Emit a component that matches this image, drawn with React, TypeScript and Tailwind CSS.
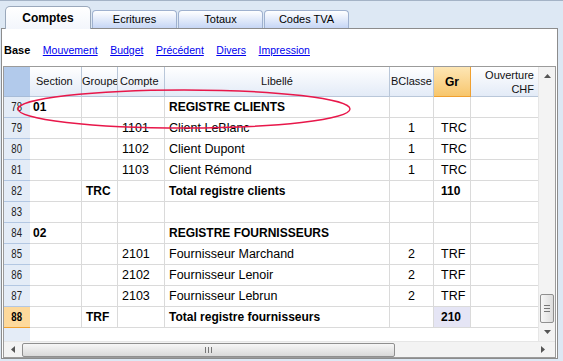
import React from 'react';

type Row = {
  n: number;
  section?: string;
  groupe?: string;
  compte?: string;
  libelle?: string;
  bclasse?: string;
  gr?: string;
  bold?: boolean;
  selected?: boolean;
};

const rows: Row[] = [
  { n: 78, section: '01', libelle: 'REGISTRE CLIENTS', bold: true },
  { n: 79, compte: '1101', libelle: 'Client LeBlanc', bclasse: '1', gr: 'TRC' },
  { n: 80, compte: '1102', libelle: 'Client Dupont', bclasse: '1', gr: 'TRC' },
  { n: 81, compte: '1103', libelle: 'Client Rémond', bclasse: '1', gr: 'TRC' },
  { n: 82, groupe: 'TRC', libelle: 'Total registre clients', gr: '110', bold: true },
  { n: 83 },
  { n: 84, section: '02', libelle: 'REGISTRE FOURNISSEURS', bold: true },
  { n: 85, compte: '2101', libelle: 'Fournisseur Marchand', bclasse: '2', gr: 'TRF' },
  { n: 86, compte: '2102', libelle: 'Fournisseur Lenoir', bclasse: '2', gr: 'TRF' },
  { n: 87, compte: '2103', libelle: 'Fournisseur Lebrun', bclasse: '2', gr: 'TRF' },
  { n: 88, groupe: 'TRF', libelle: 'Total registre fournisseurs', gr: '210', bold: true, selected: true },
];

const tabs = ['Ecritures', 'Totaux', 'Codes TVA'];
const links = ['Mouvement', 'Budget', 'Précédent', 'Divers', 'Impression'];

const cols = 'grid grid-cols-[26px_52px_36px_47px_225px_44px_37px_67px]';
const cell = 'h-[21px] border-r border-b border-[#dadada] flex items-center overflow-hidden whitespace-nowrap';
const head = 'h-[30px] border-r border-b border-[#b9c7d9] bg-gradient-to-b from-white to-[#e3ebf7] flex items-center text-[11px] text-[#111] overflow-hidden whitespace-nowrap';

const Arrow = ({ dir }: { dir: 'up' | 'down' | 'left' | 'right' }) => {
  const pts = {
    up: '0,4 3.5,0 7,4',
    down: '0,0 3.5,4 7,0',
    left: '4,0 0,3.5 4,7',
    right: '0,0 4,3.5 0,7',
  }[dir];
  const horiz = dir === 'left' || dir === 'right';
  return (
    <svg width={horiz ? 4 : 7} height={horiz ? 7 : 4} className="block">
      <polygon points={pts} fill="#555" />
    </svg>
  );
};

export default function App() {
  return (
    <div
      className="relative w-[563px] h-[361px] overflow-hidden bg-[#dde8f4] border-t border-[#a4b3c6]"
      style={{ fontFamily: '"Liberation Sans", Arial, sans-serif' }}
    >
      {/* tab strip */}
      <div className="flex items-end h-[27px] pl-[5px]">
        <div className="relative z-10 -mb-px w-[86px] h-[23px] rounded-t-[5px] border border-b-0 border-[#9aa8bb] bg-gradient-to-b from-white to-[#f3f6fc] flex items-center justify-center text-[12px] font-bold text-black">
          Comptes
        </div>
        {tabs.map((t) => (
          <div
            key={t}
            className="ml-[1px] w-[85px] h-[18px] rounded-t-[4px] border border-b-0 border-[#9fb1cf] bg-gradient-to-b from-white to-[#c6d6f5] flex items-center justify-center text-[11px] text-black"
          >
            {t}
          </div>
        ))}
      </div>

      {/* panel */}
      <div className="ml-[1px] w-[557px] h-[331px] border border-[#8c8c8c] bg-white flex flex-col">
        <div className="h-[37px] flex items-center pl-[2px] pt-[6px] gap-[12.5px] text-[10.5px]">
          <span className="font-bold text-black text-[11px]">Base</span>
          {links.map((l) => (
            <span key={l} className="text-[#0000ee] underline">
              {l}
            </span>
          ))}
        </div>

        <div className="ml-[1px] w-[553px] h-[292px] border border-[#9b9b9b] flex flex-col">
          <div className="flex h-[274px]">
            {/* table */}
            <div className="w-[534px] flex flex-col">
              <div className={cols}>
                <div className="h-[30px] bg-[#b2caeb] border-b border-[#a7bcd8]" />
                <div className={`${head} pl-[6px]`}>Section</div>
                <div className={`${head} pl-[0px]`}>Groupe</div>
                <div className={`${head} pl-[2px]`}>Compte</div>
                <div className={`${head} justify-center`}>Libellé</div>
                <div className={`${head} justify-center`}>BClasse</div>
                <div className="h-[30px] border-r border-b border-[#f0a030] bg-gradient-to-b from-[#fde6b4] to-[#f7c66c] flex items-center justify-center text-[12px] font-bold">
                  Gr
                </div>
                <div className="h-[30px] border-b border-[#b9c7d9] bg-gradient-to-b from-white to-[#e3ebf7] flex flex-col items-end justify-center pr-[4px] text-[11px] leading-[14px] text-[#111]">
                  <span>Ouverture</span>
                  <span>CHF</span>
                </div>
              </div>

              {rows.map((r) => {
                const fw = r.bold ? 'font-bold text-[12px]' : 'text-[12.5px]';
                return (
                  <div key={r.n} className={`${cols} text-black`}>
                    <div
                      className={`h-[21px] flex items-center justify-center text-[12px] border-b ${
                        r.selected
                          ? 'bg-[#fdd99c] border-[#f0a030] font-bold'
                          : 'bg-[#e4ecf7] border-[#b3c7e2] text-[#222]'
                      }`}
                    >
                      <span className="scale-x-[0.8]">{r.n}</span>
                    </div>
                    <div className={`${cell} pl-[3px] ${fw}`}>{r.section}</div>
                    <div className={`${cell} pl-[4px] ${fw}`}>{r.groupe}</div>
                    <div className={`${cell} pl-[4px] ${fw}`}>{r.compte}</div>
                    <div className={`${cell} pl-[4px] ${fw}`}>{r.libelle}</div>
                    <div className={`${cell} justify-center ${fw}`}>{r.bclasse}</div>
                    <div className={`${cell} pl-[7px] ${fw} ${r.selected ? 'bg-[#e5e5f5]' : ''}`}>{r.gr}</div>
                    <div className={`${cell} border-r-0`} />
                  </div>
                );
              })}

              <div className="flex-1 flex">
                <div className="w-[26px] bg-[#e4ecf7]" />
              </div>
            </div>

            {/* vertical scrollbar */}
            <div className="w-[17px] bg-[#f3f3f3] border-l border-[#e6e6e6] flex flex-col items-center">
              <div className="h-[17px] flex items-center justify-center">
                <Arrow dir="up" />
              </div>
              <div className="flex-1" />
              <div className="w-[14px] h-[29px] rounded-[2px] border border-[#8f8f8f] bg-gradient-to-r from-[#f7f7f7] to-[#dcdcdc] flex flex-col items-center justify-center gap-[2px]">
                <div className="w-[6px] h-px bg-[#777]" />
                <div className="w-[6px] h-px bg-[#777]" />
                <div className="w-[6px] h-px bg-[#777]" />
              </div>
              <div className="h-[18px] flex items-center justify-center">
                <Arrow dir="down" />
              </div>
            </div>
          </div>

          {/* horizontal scrollbar */}
          <div className="h-[16px] bg-[#f3f3f3] border-t border-[#e6e6e6] flex items-center">
            <div className="w-[18px] flex items-center justify-center">
              <Arrow dir="left" />
            </div>
            <div className="w-[373px] h-[14px] rounded-[2px] border border-[#8f8f8f] bg-gradient-to-b from-[#f7f7f7] to-[#d9d9d9] flex items-center justify-center gap-[2px]">
              <div className="w-px h-[6px] bg-[#777]" />
              <div className="w-px h-[6px] bg-[#777]" />
              <div className="w-px h-[6px] bg-[#777]" />
            </div>
            <div className="flex-1" />
            <div className="w-[24px] flex items-center justify-center">
              <Arrow dir="right" />
            </div>
          </div>
        </div>
      </div>

      {/* annotation ellipse */}
      <svg className="absolute inset-0 pointer-events-none" width={563} height={361}>
        <ellipse cx={184} cy={108} rx={166} ry={19} fill="none" stroke="#e8174a" strokeWidth={1.4} />
      </svg>
    </div>
  );
}
